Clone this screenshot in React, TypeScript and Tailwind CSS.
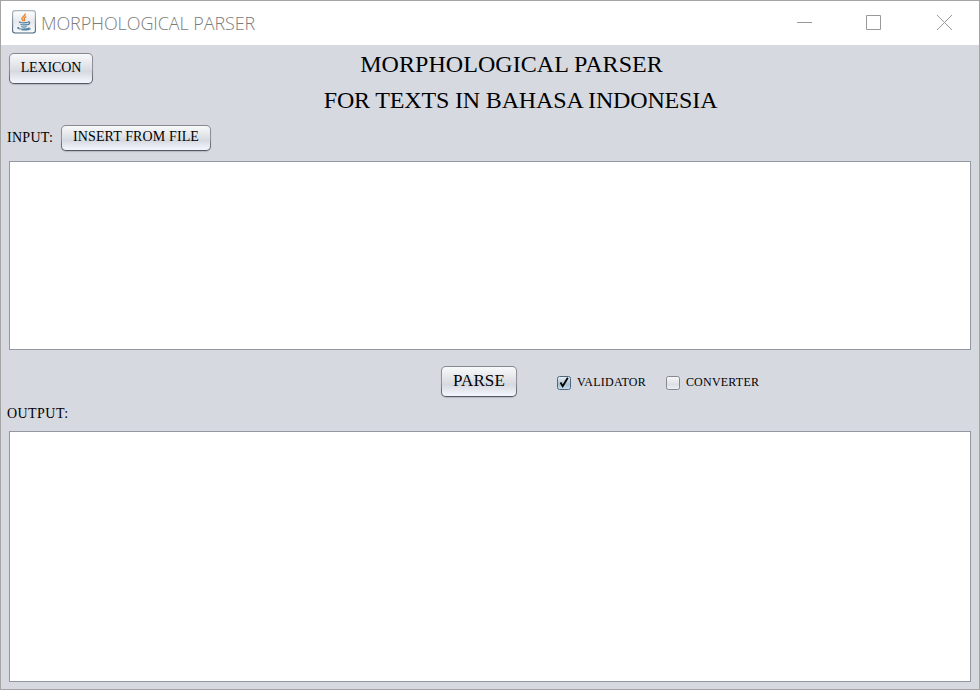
import type { ReactNode } from "react";

const serif = "font-['Liberation_Serif',serif] text-black whitespace-nowrap leading-none";

function JavaIcon() {
  return (
    <svg width="24" height="24" viewBox="0 0 24 24" fill="none">
      <defs>
        <linearGradient id="tile" x1="0" y1="0" x2="0" y2="1">
          <stop offset="0" stopColor="#ffffff" />
          <stop offset="0.5" stopColor="#e6e8eb" />
          <stop offset="1" stopColor="#fafbfc" />
        </linearGradient>
        <linearGradient id="rim" x1="0" y1="0" x2="0" y2="1">
          <stop offset="0" stopColor="#a9b4bd" />
          <stop offset="1" stopColor="#426078" />
        </linearGradient>
      </defs>
      <rect x="0.6" y="0.6" width="22.8" height="22.4" rx="2.5" fill="url(#tile)" stroke="url(#rim)" strokeWidth="1.1" />
      <path d="M13.2 3.5c1 2-3.6 3.2-3.3 5.2.2 1.1 1.1 1.6 1.6 2.5M14.3 6.6c-2 .8-2.7 1.6-1.8 2.7.4.6.2 1.2-.4 1.8" stroke="#e9802f" strokeWidth="1.4" />
      <path d="M8.5 11.8c-2 .6-.7 1 3.2 1 1.8 0 3.3-.2 4.3-.5M8.4 14.4c.8.7 5.2.8 7 0M9.3 16.5c1.3.6 4 .6 5.4 0M15.8 11.9c2.6-.5 2.5 2.1-.2 3M7.2 17.3c-3.6.8-.6 1.8 4.3 1.8 4.1 0 6.8-.8 5-1.5M18.6 18.4c-.7 1.4-5 1.7-9 1.6" stroke="#5382a1" strokeWidth="1.2" />
    </svg>
  );
}

function Button({ className, children }: { className: string; children: ReactNode }) {
  return (
    <button className={`rounded-[5px] bg-gradient-to-b from-[#85888e] via-[#92959b] to-[#53565c] p-px shadow-[0_1px_1px_#b5b9c1] ${className}`}>
      <span className={`flex h-full w-full items-center justify-center rounded-[4px] bg-[linear-gradient(#f8f9fa,#e5e7eb_35%,#d6d9df_60%,#f4f7fd)] pb-[2px] ${serif}`}>
        {children}
      </span>
    </button>
  );
}

function Check({ checked, children }: { checked?: boolean; children: ReactNode }) {
  return (
    <label className={`flex items-start text-[12px] tracking-[0.22px] ${serif}`}>
      <svg width="14" height="15" viewBox="0 0 14 15" fill="none" className="mr-[6px] mt-[1px] shrink-0">
        <defs>
          <linearGradient id={checked ? "on" : "off"} x1="0" y1="0" x2="0" y2="1">
            <stop offset="0" stopColor={checked ? "#e8f0f5" : "#f8f9fa"} />
            <stop offset="0.6" stopColor={checked ? "#a9bfd0" : "#dcdfe4"} />
            <stop offset="1" stopColor={checked ? "#c8dfef" : "#edf0f5"} />
          </linearGradient>
        </defs>
        <rect x="0.5" y="0.5" width="13" height="13" rx="2" fill={checked ? "url(#on)" : "url(#off)"} stroke={checked ? "#4b6880" : "#85888e"} />
        {checked && <path d="M3.5 6.5l2.2 3.8L10.8 1.8" stroke="#000" strokeWidth="1.8" />}
      </svg>
      <span className="mt-[1px]">{children}</span>
    </label>
  );
}

/* Desktop content showing through the one-pixel window frame. */
function FrameSpecks() {
  return (
    <svg className="pointer-events-none absolute -left-px -top-px" width="980" height="690" fill="none">
      <path d="M0 .5h8M65 .5h7M419 .5h7" stroke="#2b2629" />
      <path d="M470 .5h7" stroke="#a99a63" />
      <path d="M477 .5h4" stroke="#3f9148" />
      <path d="M571 .5h11" stroke="#7c97ad" />
      <path d="M496 .5h47M599 .5h104" stroke="#6c6670" strokeDasharray="2 4 1 3 2 5" />
      <path d="M191 .5h2M205 .5h2M213 .5h2" stroke="#97673f" />
      <path d="M40 689.5h48M338 689.5h22M502 689.5h14" stroke="#77737a" strokeDasharray="2 1 1 2" />
      <path d="M144 689.5h2M242 689.5h3M404 689.5h4M470 689.5h1M566 689.5h4M628 689.5h18M653 689.5h4M725 689.5h1M748 689.5h4" stroke="#5d5960" />
      <path d="M.5 71v2M.5 77v1M.5 101v2M.5 303v2M.5 606v1M979.5 143v1M979.5 267v4M979.5 361v2M979.5 387v2M979.5 604v1M979.5 608v1" stroke="#393637" />
      <path d="M.5 577v7M979.5 350v6M979.5 401v6" stroke="#a16c32" />
      <path d="M.5 351v5M.5 372v4M979.5 109v4" stroke="#80aaa5" />
    </svg>
  );
}

export default function App() {
  return (
    <div className="relative flex h-[690px] w-[980px] flex-col overflow-hidden border border-[#a5a4a5] bg-[#d6d9e0]">
      <header className="flex h-[44px] shrink-0 items-start bg-white pl-[11px]">
        <div className="mt-[9px]"><JavaIcon /></div>
        <h1 className="ml-[5px] mt-[10px] whitespace-nowrap font-['Open_Sans',sans-serif] text-[18px] font-light leading-[25px] tracking-[-0.1px] text-[#7c7c7c]">MORPHOLOGICAL PARSER</h1>
        <svg width="156" height="16" viewBox="0 0 156 16" className="ml-auto mr-[26px] mt-[14px]" fill="none" stroke="#999">
          <path d="M0 7.5h15M69.5.5h14v14h-14z" />
          <path d="M140 0l15 15M155 0l-15 15" />
        </svg>
      </header>
      <main className="flex flex-1 flex-col px-2">
        <div className="flex h-[79px] shrink-0 items-start">
          <Button className="mt-2 h-[31px] w-[84px] text-[14px] tracking-[-0.1px]">LEXICON</Button>
          <div className={`ml-[229px] mt-[1px] w-[397px] text-center text-[24px] ${serif}`}>
            <div className="h-[36px] pr-[18px] leading-[36px] tracking-[0.05px]">MORPHOLOGICAL PARSER</div>
            <div className="h-[36px] leading-[36px] tracking-[-0.16px]">FOR TEXTS IN BAHASA INDONESIA</div>
          </div>
        </div>
        <div className="flex h-[37px] shrink-0 items-start">
          <span className={`-ml-[2px] mt-[7px] w-[54px] text-[14px] tracking-[0.3px] ${serif}`}>INPUT:</span>
          <Button className="mt-[1px] h-[26px] w-[150px] text-[14px] tracking-[0.12px]">INSERT FROM FILE</Button>
        </div>
        <div className="h-[189px] shrink-0 border border-[#9297a1] bg-white" />
        <div className="flex h-[57px] shrink-0 items-start pl-[432px] pt-4">
          <Button className="h-[31px] w-[76px] text-[17px] tracking-[0.1px]">PARSE</Button>
          <div className="ml-[40px] mt-[9px] flex gap-[20px]">
            <Check checked>VALIDATOR</Check>
            <Check>CONVERTER</Check>
          </div>
        </div>
        <div className={`-ml-[2px] h-[24px] shrink-0 text-[14px] tracking-[0.45px] ${serif}`}>OUTPUT:</div>
        <div className="mb-[7px] flex-1 border border-[#9297a1] bg-white" />
      </main>
      <FrameSpecks />
    </div>
  );
}
